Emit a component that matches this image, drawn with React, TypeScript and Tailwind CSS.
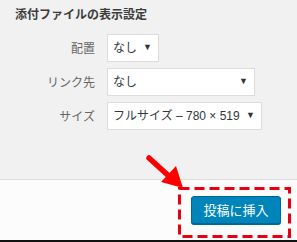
import React from "react";

const font = { fontFamily: '"Noto Sans CJK JP", "Noto Sans", sans-serif' };
const selFont = { fontFamily: '"Liberation Sans", "Noto Sans CJK JP", sans-serif' };

function Select({ text, width }: { text: string; width: number }) {
  return (
    <div
      className="flex h-[28px] items-center justify-between border border-[#dddddd] bg-white pl-[5px] pr-[6px] text-[12px] text-[#32373c]"
      style={{ width, ...selFont }}
    >
      <span className="whitespace-nowrap">{text}</span>
      <span className="text-[9px] text-[#333]">▼</span>
    </div>
  );
}

export default function App() {
  const rows = [
    { label: "配置", text: "なし", width: 52 },
    { label: "リンク先", text: "なし", width: 148 },
    { label: "サイズ", text: "フルサイズ – 780 × 519", width: 155 },
  ];
  return (
    <div className="relative flex h-[242px] w-[297px] flex-col overflow-hidden" style={font}>
      <div className="h-[180px] border-b border-[#dddddd] bg-[#f1f1f1]">
        <div className="pl-[15px] pt-[4px] text-[12px] font-bold leading-[20px] text-[#3c3c3c]">
          添付ファイルの表示設定
        </div>
        <div className="mt-[10px] flex flex-col gap-[6px]">
          {rows.map((r) => (
            <div key={r.label} className="flex items-center">
              <div className="w-[95px] text-right text-[12px] text-[#666]">{r.label}</div>
              <div className="ml-[12px]">
                <Select text={r.text} width={r.width} />
              </div>
            </div>
          ))}
        </div>
      </div>
      <div className="flex flex-1 justify-end border-b-2 border-[#111] bg-[#fcfcfc] pr-[16px] pt-[16px]">
        <button className="h-[28px] w-[90px] rounded-[3px] border border-[#006799] bg-[#0085ba] text-[13px] text-white shadow-[0_1px_0_#006799]">
          投稿に挿入
        </button>
      </div>
      <svg className="absolute left-0 top-0" width="297" height="242" viewBox="0 0 297 242">
        <rect x="179.5" y="188.5" width="110" height="48" fill="none" stroke="#e60012" strokeWidth="3" strokeDasharray="10 5" />
        <line x1="149" y1="158" x2="171" y2="178" stroke="#ff0000" strokeWidth="5.5" strokeLinecap="round" />
        <polygon points="183,188 161,182 176,166" fill="#ff0000" />
      </svg>
    </div>
  );
}
